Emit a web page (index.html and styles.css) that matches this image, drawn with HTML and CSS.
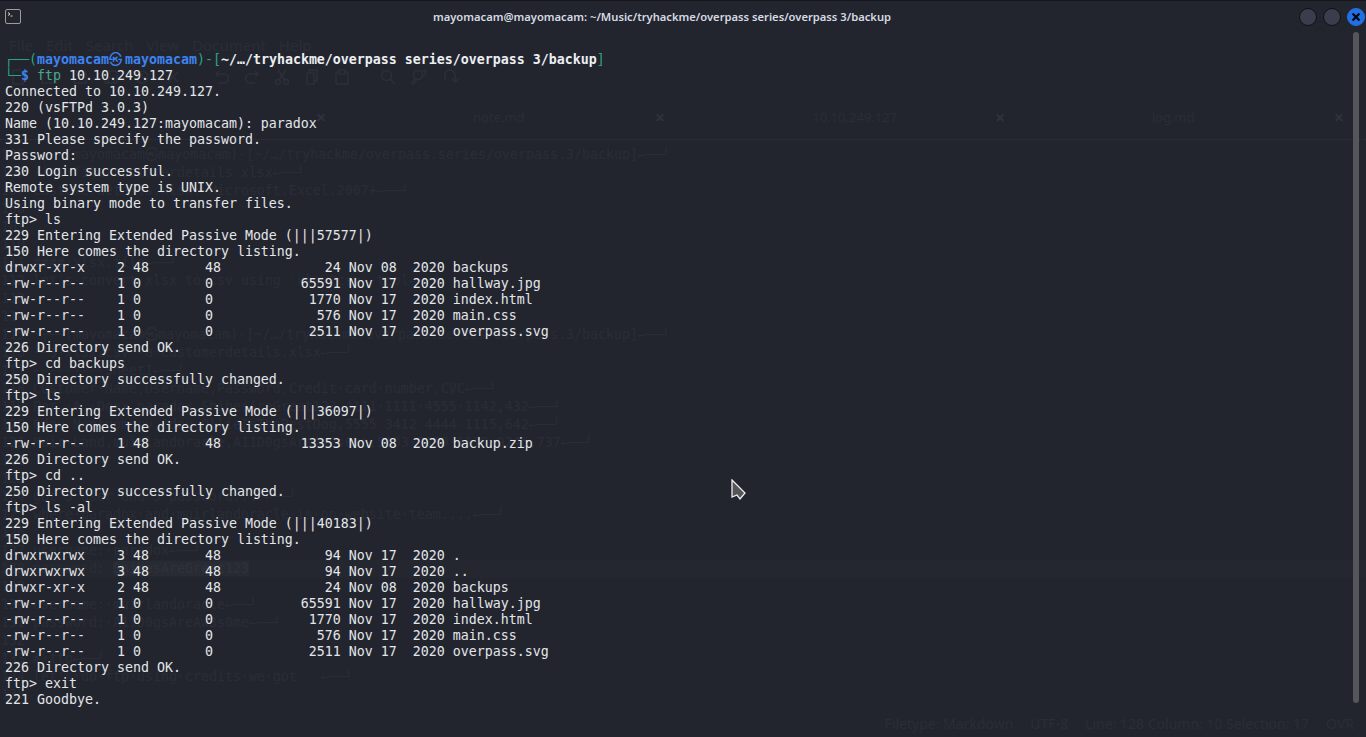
FILE: index.html
```html
<!DOCTYPE html>
<html lang="en">
<head>
<meta charset="utf-8">
<title>mayomacam@mayomacam: ~/Music/tryhackme/overpass series/overpass 3/backup</title>
<link rel="stylesheet" href="styles.css">
</head>
<body>
<div class="window">
  <div class="ghost" aria-hidden="true">
    <div class="ghost-menu"><span>File</span><span>Edit</span><span>Search</span><span>View</span><span>Document</span><span>Help</span></div>
    <div class="ghost-tools">
      <div class="tool-group tool-group-a">
        <svg viewBox="0 0 16 16"><path d="M3 1h7l3 3v11H3z"/></svg>
        <svg viewBox="0 0 16 16"><path d="M1 4h5l1 2h8v8H1z"/></svg>
        <svg viewBox="0 0 16 16"><path d="M2 2h10l2 2v10H2zM5 2v4h6V2"/></svg>
        <svg viewBox="0 0 16 16"><path d="M2 2h10l2 2v10H2zM5 9h6v5H5z"/></svg>
        <svg viewBox="0 0 16 16"><circle cx="8" cy="8" r="6"/><path d="M8 4v4l3 2"/></svg>
        <svg viewBox="0 0 16 16"><path d="M3 3l10 10M13 3L3 13"/></svg>
      </div>
      <div class="tool-group tool-group-b">
        <svg viewBox="0 0 16 16"><path d="M5 2L2 5l3 3M2 5h8a4 4 0 0 1 0 9H5"/></svg>
        <svg viewBox="0 0 16 16"><path d="M11 2l3 3-3 3M14 5H6a4 4 0 0 0 0 9h5"/></svg>
        <svg viewBox="0 0 16 16"><circle cx="4" cy="13" r="2.5"/><circle cx="12" cy="13" r="2.5"/><path d="M5 11L12 1M11 11L4 1"/></svg>
        <svg viewBox="0 0 16 16"><path d="M5 4V1h8v11h-3M3 4h7v11H3z"/></svg>
        <svg viewBox="0 0 16 16"><path d="M5 3H2v12h12V3h-3M5 1h6v4H5z"/></svg>
      </div>
      <div class="tool-group tool-group-c">
        <svg viewBox="0 0 16 16"><circle cx="6.5" cy="6.5" r="5"/><path d="M10 10l5 5"/></svg>
        <svg viewBox="0 0 16 16"><circle cx="7" cy="6" r="4.5"/><path d="M4 9l-3 5 2 1 3-5M11 2l3-1 1 3-5 5"/></svg>
        <svg viewBox="0 0 16 16"><path d="M3 11V6a5 5 0 0 1 10 0v7M10 10l3 3 3-3"/></svg>
      </div>
    </div>
    <div class="ghost-tabs">
      <div class="ghost-tab"><span></span><b>✕</b></div>
      <div class="ghost-tab"><span>note.md</span><b>✕</b></div>
      <div class="ghost-tab"><span>10.10.249.127</span><b>✕</b></div>
      <div class="ghost-tab"><span>log.md</span><b>✕</b></div>
    </div>
<pre class="ghost-code">105 ·┌──(mayomacam㉿mayomacam)-[~/…/tryhackme/overpass.series/overpass.3/backup]←──┘
106 ·└─$·file·customerdetails.xlsx←──┘
107 customerdetails.xlsx:·Microsoft.Excel.2007+←──┘
108 
109 
110 
111 ####·xlsx.file←──┘
112 let's·convert·xlsx·to·csv·using·`xlsx2csv`·tool←──┘
113 
114 
115 ·┌──(mayomacam㉿mayomacam)-[~/…/tryhackme/overpass.series/overpass.3/backup]←──┘
116 └─$·xlsx2csv·-a·customerdetails.xlsx←──┘
117 --------·Sheet1←──┘
118 Customer·Name,Username,Password,Credit·card·number,CVC←──┘
119 Par.·A.·Doxx,paradox,ShibesAreGreat123,4111·1111·4555·1142,432←──┘
120 0day·Montgomery,0day,OllieIsTheBestDog,5555·3412·4444·1115,642←──┘
121 Muir·Land,muirlandoracle,A11D0gsAreAw3s0me,5103·2219·1119·9245,737←──┘
122 
123 
124 got·3·user·and·3·password....←──┘
125 where·paradox·and·muirlandoracle·is·on·website·team....←──┘
126 
127 username:·paradox←──┘
<span class="ghost-current">128 password:·<span class="ghost-selected">ShibesAreGreat123</span></span>
129 
130 username:·muirlandoracle←──┘
131 password:·A11D0gsAreAw3s0me←──┘
132 
133 #·ftp←──┘
134 let's·do·ftp·using·credits·we·got...←──┘
135 </pre>
    <div class="ghost-status"><span>Filetype: Markdown</span><span>UTF-8</span><span>Line: 128 Column: 10 Selection: 17</span><span>OVR</span></div>
  </div>

  <header class="titlebar">
    <svg class="term-icon" viewBox="0 0 16 15"><rect x="0.5" y="0.5" width="15" height="14" rx="1.5"/><path d="M3 3.5l2 1.5-2 1.5M5.5 7h2"/></svg>
    <div class="title">mayomacam@mayomacam: ~/Music/tryhackme/overpass series/overpass 3/backup</div>
    <div class="controls">
      <span class="ctl"></span>
      <span class="ctl"></span>
      <span class="ctl ctl-close"><svg viewBox="0 0 10 10"><path d="M1.5 1.5l7 7M8.5 1.5l-7 7"/></svg></span>
    </div>
  </header>

  <main class="term-row">
<pre class="terminal"><span class="g">┌──(</span><span class="b">mayomacam<span class="skull">㉿</span>mayomacam</span><span class="g">)-[</span><span class="w">~/…/tryhackme/overpass series/overpass 3/backup</span><span class="g">]</span>
<span class="g">└─</span><span class="b">$</span> <span class="cmd">ftp</span> 10.10.249.127
Connected to 10.10.249.127.
220 (vsFTPd 3.0.3)
Name (10.10.249.127:mayomacam): paradox
331 Please specify the password.
Password:
230 Login successful.
Remote system type is UNIX.
Using binary mode to transfer files.
ftp&gt; ls
229 Entering Extended Passive Mode (|||57577|)
150 Here comes the directory listing.
drwxr-xr-x    2 48       48             24 Nov 08  2020 backups
-rw-r--r--    1 0        0           65591 Nov 17  2020 hallway.jpg
-rw-r--r--    1 0        0            1770 Nov 17  2020 index.html
-rw-r--r--    1 0        0             576 Nov 17  2020 main.css
-rw-r--r--    1 0        0            2511 Nov 17  2020 overpass.svg
226 Directory send OK.
ftp&gt; cd backups
250 Directory successfully changed.
ftp&gt; ls
229 Entering Extended Passive Mode (|||36097|)
150 Here comes the directory listing.
-rw-r--r--    1 48       48          13353 Nov 08  2020 backup.zip
226 Directory send OK.
ftp&gt; cd ..
250 Directory successfully changed.
ftp&gt; ls -al
229 Entering Extended Passive Mode (|||40183|)
150 Here comes the directory listing.
drwxrwxrwx    3 48       48             94 Nov 17  2020 .
drwxrwxrwx    3 48       48             94 Nov 17  2020 ..
drwxr-xr-x    2 48       48             24 Nov 08  2020 backups
-rw-r--r--    1 0        0           65591 Nov 17  2020 hallway.jpg
-rw-r--r--    1 0        0            1770 Nov 17  2020 index.html
-rw-r--r--    1 0        0             576 Nov 17  2020 main.css
-rw-r--r--    1 0        0            2511 Nov 17  2020 overpass.svg
226 Directory send OK.
ftp&gt; exit
221 Goodbye.</pre>
    <div class="scrollbar"></div>
  </main>

  <svg class="cursor" viewBox="0 0 16 22"><path d="M1 1L14 14L9 20L6 16L1 18Z"/></svg>
</div>
</body>
</html>
```

FILE: styles.css
```css
* { box-sizing: border-box; }
html, body { margin: 0; padding: 0; height: 100%; background: #22252e; overflow: hidden; }
.window {
  position: relative;
  width: 1366px;
  height: 737px;
  overflow: hidden;
  background: #22252e;
  border-top: 1px solid #14151a;
  display: flex;
  flex-direction: column;
}

/* Faint editor window showing through the translucent terminal */
.ghost {
  position: absolute;
  top: -1px;
  left: 0;
  right: 0;
  bottom: 0;
  display: flex;
  flex-direction: column;
  padding-top: 36px;
  color: #2a2d37;
}
.ghost-menu {
  display: flex;
  gap: 13px;
  height: 18px;
  padding-left: 9px;
  font: 15px/18px "Noto Sans", sans-serif;
}
.ghost-tools {
  display: flex;
  height: 16px;
  margin-top: 15px;
}
.tool-group { display: flex; }
.tool-group svg {
  width: 16px;
  height: 16px;
  fill: none;
  stroke: #2c2f39;
  stroke-width: 1.5;
}
.tool-group-a { gap: 15px; margin-left: 10px; }
.tool-group-b { gap: 14px; margin-left: 33px; }
.tool-group-c { gap: 15px; margin-left: 30px; }
.ghost-tabs {
  display: flex;
  height: 40px;
  margin-top: 15px;
  padding-bottom: 5px;
  padding-right: 22px;
  border-bottom: 1px dotted #31343e;
}
.ghost-tab {
  flex: 1;
  display: flex;
  align-items: center;
  justify-content: space-between;
  padding-left: 147px;
  font: 13px "Noto Sans", sans-serif;
}
.ghost-tab:first-child { flex: 0 0 326px; }
.ghost-tab b { font-size: 12px; font-weight: 700; color: #30333d; }
.ghost-code {
  margin: 6px 0 0;
  padding-left: 1px;
  font: 13.29px/18px "DejaVu Sans Mono", "Noto Sans CJK KR", monospace;
  color: #2a2d37;
  white-space: pre;
}
.ghost-current {
  display: inline-block;
  width: 1365px;
  background: #24272f;
}
.ghost-selected { background: #282b34; color: #2f323b; }
.ghost-status {
  position: absolute;
  right: 12px;
  bottom: 4px;
  display: flex;
  gap: 17px;
  font: 14px/18px "Noto Sans", sans-serif;
}

/* Title bar */
.titlebar {
  position: relative;
  display: flex;
  align-items: center;
  justify-content: space-between;
  height: 31px;
  padding: 0 1px 0 5px;
  flex: none;
}
.term-icon {
  width: 16px;
  height: 15px;
  fill: #24262c;
  stroke: #9a9ca0;
}
.term-icon path { fill: none; stroke: #d8d8d8; }
.title {
  position: absolute;
  left: 0;
  right: 42px;
  text-align: center;
  font: 600 11.2px/30px "Noto Sans", sans-serif;
  color: #d6dae2;
}
.controls { display: flex; gap: 6px; position: relative; }
.ctl {
  width: 18px;
  height: 18px;
  border-radius: 50%;
  background: #393d4c;
  border: 1px solid #101116;
  display: flex;
  align-items: center;
  justify-content: center;
}
.ctl-close { background: #2170e6; border-color: #2170e6; }
.ctl-close svg { width: 10px; height: 10px; fill: none; stroke: #05070c; stroke-width: 2.2; }

/* Terminal */
.term-row {
  position: relative;
  display: flex;
  flex: 1;
  min-height: 0;
  align-items: flex-start;
}
.terminal {
  flex: 1;
  margin: 0;
  padding: 20px 0 0 5px;
  font: 13.29px/16px "DejaVu Sans Mono", "Noto Sans CJK KR", monospace;
  color: #e4e6ea;
  white-space: pre;
}
.g { color: #2aa388; }
.b { color: #3f83f0; font-weight: 700; }
.w { color: #eceef2; font-weight: 700; }
.cmd { color: #46a98e; }
.skull {
  display: inline-block;
  width: 16px;
  line-height: 16px;
  font-weight: 400;
  overflow: hidden;
  vertical-align: top;
}
.scrollbar {
  flex: none;
  width: 6px;
  height: 671px;
  margin-right: 7px;
  border-radius: 3px;
  background: #54565c;
}

/* Mouse pointer */
.cursor {
  position: absolute;
  left: 731px;
  top: 478px;
  width: 16px;
  height: 22px;
  fill: #55565a;
  stroke: #eeeeee;
  stroke-width: 1.3;
}
```
